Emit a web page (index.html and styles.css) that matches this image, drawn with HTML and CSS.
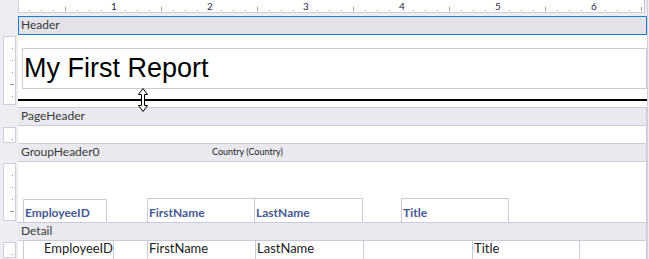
FILE: index.html
```html
<!DOCTYPE html>
<html lang="en">
<head>
    <meta charset="UTF-8">
    <title>Report Designer</title>
    <link rel="stylesheet" href="styles.css">
</head>
<body>
<div class="page">
    <div class="ruler">
        <span>1</span><span>2</span><span>3</span><span>4</span><span>5</span><span>6</span>
    </div>

    <div class="designer">
        <!-- Header -->
        <div class="gutter"></div>
        <div class="band band-selected">Header</div>
        <div class="gutter"><div class="vruler vruler-header"></div></div>
        <div class="section section-header">
            <div class="title-box">My First Report</div>
            <div class="thick-line"></div>
            <svg class="resize-cursor" width="10" height="24" viewBox="0 0 10 24">
                <path d="M5 0.5 L9.5 6.5 L6.5 6.5 L6.5 17.5 L9.5 17.5 L5 23.5 L0.5 17.5 L3.5 17.5 L3.5 6.5 L0.5 6.5 Z" fill="#fff" stroke="#000" stroke-width="1"/>
            </svg>
        </div>

        <!-- PageHeader -->
        <div class="gutter"></div>
        <div class="band">PageHeader</div>
        <div class="gutter"><div class="vruler vruler-small"></div></div>
        <div class="section section-pageheader"></div>

        <!-- GroupHeader0 -->
        <div class="gutter"></div>
        <div class="band band-group">
            <span class="band-name">GroupHeader0</span>
            <span class="band-note">Country (Country)</span>
        </div>
        <div class="gutter"><div class="vruler vruler-group"></div></div>
        <div class="section section-group">
            <div class="caption caption-id">EmployeeID</div>
            <div class="caption caption-first">FirstName</div>
            <div class="caption caption-last">LastName</div>
            <div class="caption caption-title">Title</div>
        </div>

        <!-- Detail -->
        <div class="gutter"></div>
        <div class="band">Detail</div>
        <div class="gutter"><div class="vruler vruler-small"></div></div>
        <div class="section section-detail">
            <div class="field field-id">EmployeeID</div>
            <div class="field field-first">FirstName</div>
            <div class="field field-last">LastName</div>
            <div class="field field-title">Title</div>
        </div>
    </div>
</div>
</body>
</html>
```

FILE: styles.css
```css
body {
    margin: 0;
    background-color: #eeeef2;
    font-family: Lato, "Noto Sans", sans-serif;
    overflow: hidden;
}
.page {
    width: 647px;
    height: 259px;
    border-right: 1px solid #d2d2dc;
    overflow: hidden;
}

/* Top ruler */
.ruler {
    margin-left: 18px;
    width: 625px;
    height: 12px;
    background-color: #fff;
    border-left: 1px solid #d6d6de;
    border-right: 1px solid #c4c4cc;
    border-bottom: 1px solid #cfcfd8;
    margin-bottom: 3px;
    padding-left: 47px;
    box-sizing: content-box;
    display: flex;
    background-image:
        linear-gradient(to right, transparent 11px, #9a9aa4 11px 12px, transparent 12px 23px, #9a9aa4 23px 24px, transparent 24px 35px, #9a9aa4 35px 36px, transparent 36px 59px, #9a9aa4 59px 60px, transparent 60px 71px, #9a9aa4 71px 72px, transparent 72px 83px, #9a9aa4 83px 84px, transparent 84px),
        linear-gradient(to right, transparent 47px, #9a9aa4 47px 48px, transparent 48px);
    background-size: 96px 1px, 96px 4px;
    background-position: 0 10px, 0 7px;
    background-repeat: repeat-x;
    background-origin: border-box;
    width: 578px;
}
.ruler span {
    flex: 0 0 96px;
    text-align: center;
    font-size: 10px;
    line-height: 12px;
    color: #2a2a44;
}

/* Designer grid */
.designer {
    display: grid;
    grid-template-columns: 18px 629px;
}
.gutter {
    padding: 1px 0 0 3px;
}
.vruler {
    width: 11px;
    background-color: #fff;
    border: 1px solid #cfcfdc;
    background-image:
        linear-gradient(to bottom, transparent 11px, #8e8e98 11px),
        linear-gradient(#8e8e98, #8e8e98);
    background-size: 1px 12px, 4px 1px;
    background-position: 8px 0, 6px 47px;
    background-repeat: repeat-y, no-repeat;
}
.vruler-header {
    height: 67px;
}
.vruler-small {
    height: 14px;
}
.vruler-group {
    height: 56px;
}

.band {
    height: 17px;
    line-height: 16px;
    padding-left: 3px;
    font-size: 12px;
    color: #3a3a3a;
    background-color: #e9e9ef;
    border-top: 1px solid #cacad8;
    border-bottom: 1px solid #cacad8;
    border-right: 1px solid #cacad8;
}
.band-selected {
    background-color: #e2e2e8;
    border: 1px solid #1b7ed2;
    padding-left: 2px;
}
.band-group {
    display: flex;
}
.band-name {
    flex: 0 0 191px;
}
.band-note {
    font-size: 9px;
    color: #222;
}

.section {
    background-color: #fff;
    border-right: 1px solid #cacad8;
}

/* Header section */
.section-header {
    position: relative;
    height: 72px;
    padding-top: 13px;
    box-sizing: border-box;
    border-right: none;
}
.title-box {
    margin-left: 4px;
    height: 39px;
    border: 1px solid #cacad8;
    padding-left: 1px;
    font-family: "Liberation Sans", Arial, sans-serif;
    font-size: 27px;
    line-height: 39px;
    color: #000;
}
.thick-line {
    margin-top: 10px;
    height: 2px;
    background-color: #000;
}
.resize-cursor {
    position: absolute;
    left: 120px;
    top: 53px;
}

.section-pageheader {
    height: 17px;
}

/* Group header captions */
.section-group {
    height: 60px;
    display: flex;
    align-items: flex-end;
}
.caption {
    height: 23px;
    border: 1px solid #cacad8;
    border-bottom: none;
    box-sizing: border-box;
    width: 108px;
    display: flex;
    align-items: flex-end;
    padding: 0 0 2px 1px;
    font-size: 12px;
    font-weight: bold;
    color: #465a94;
    line-height: 14px;
}
.caption-id {
    margin-left: 5px;
    width: 84px;
    height: 23px;
}
.caption-first {
    margin-left: 40px;
    height: 24px;
}
.caption-last {
    height: 24px;
    border-left: none;
}
.caption-title {
    margin-left: 38px;
    height: 24px;
}

/* Detail fields */
.section-detail {
    height: 19px;
    display: flex;
}
.field {
    border-left: 1px solid #cacad8;
    border-right: 1px solid #cacad8;
    box-sizing: border-box;
    font-size: 13px;
    line-height: 15px;
    color: #222;
    padding-left: 1px;
}
.field-id {
    margin-left: 5px;
    width: 91px;
    text-align: right;
    padding-right: 0;
}
.field-first {
    margin-left: 33px;
    width: 108px;
    border-right: none;
}
.field-last {
    width: 109px;
}
.field-title {
    margin-left: 108px;
    width: 108px;
}
```
